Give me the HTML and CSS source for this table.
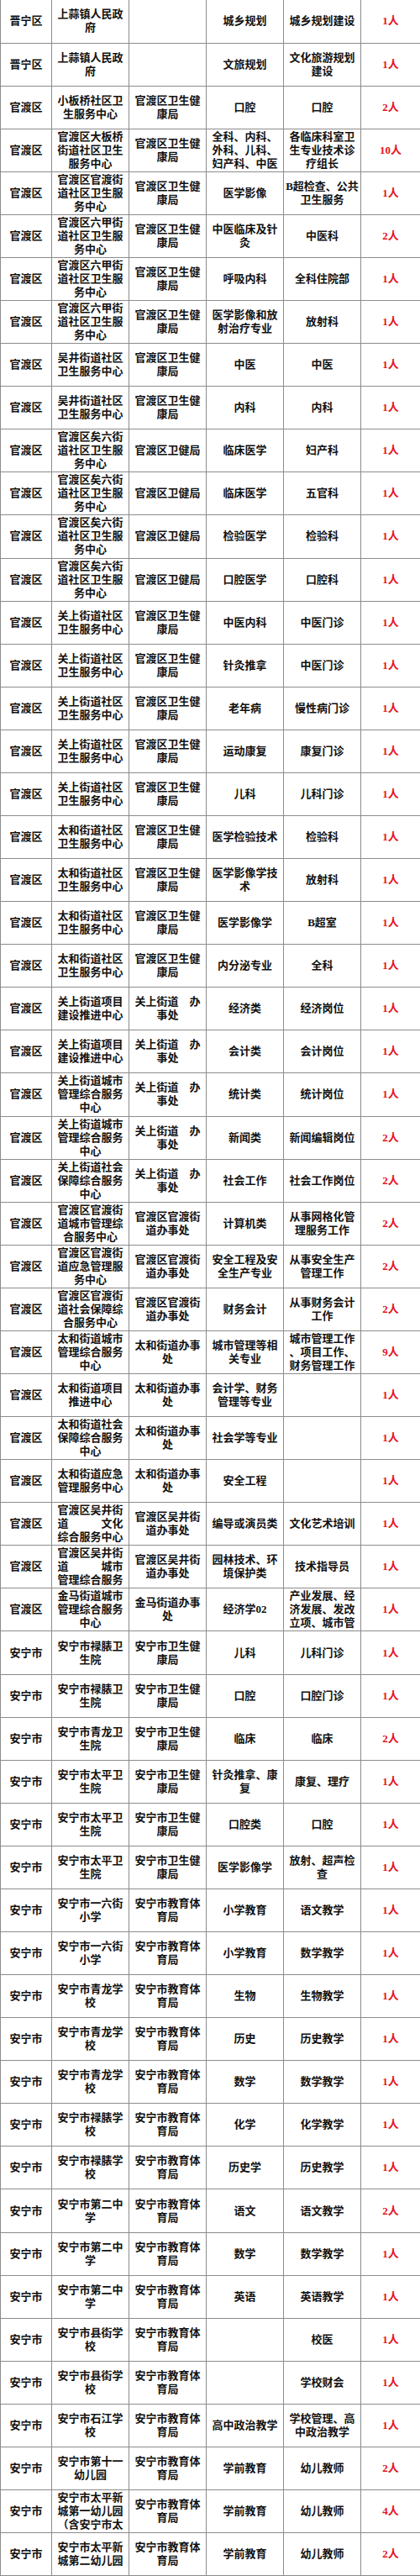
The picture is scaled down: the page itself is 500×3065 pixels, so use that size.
FILE: index.html
```html
<!DOCTYPE html>
<html lang="zh-CN">
<head>
<meta charset="utf-8">
<title>岗位表</title>
<link rel="stylesheet" href="styles.css">
</head>
<body>
<table class="sheet">
<colgroup>
<col class="w-area"><col class="w-unit"><col class="w-dept"><col class="w-major"><col class="w-post"><col class="w-num">
</colgroup>
<tbody>
<tr><td>晋宁区</td><td>上蒜镇人民政府</td><td></td><td>城乡规划</td><td>城乡规划建设</td><td class="num">1人</td></tr>
<tr><td>晋宁区</td><td>上蒜镇人民政府</td><td></td><td>文旅规划</td><td>文化旅游规划建设</td><td class="num">1人</td></tr>
<tr><td>官渡区</td><td>小板桥社区卫生服务中心</td><td>官渡区卫生健康局</td><td>口腔</td><td>口腔</td><td class="num">2人</td></tr>
<tr><td>官渡区</td><td>官渡区大板桥街道社区卫生服务中心</td><td>官渡区卫生健康局</td><td>全科、内科、外科、儿科、妇产科、中医</td><td>各临床科室卫生专业技术诊疗组长</td><td class="num">10人</td></tr>
<tr><td>官渡区</td><td>官渡区官渡街道社区卫生服务中心</td><td>官渡区卫生健康局</td><td>医学影像</td><td>B超检查、公共卫生服务</td><td class="num">1人</td></tr>
<tr><td>官渡区</td><td>官渡区六甲街道社区卫生服务中心</td><td>官渡区卫生健康局</td><td>中医临床及针灸</td><td>中医科</td><td class="num">2人</td></tr>
<tr><td>官渡区</td><td>官渡区六甲街道社区卫生服务中心</td><td>官渡区卫生健康局</td><td>呼吸内科</td><td>全科住院部</td><td class="num">1人</td></tr>
<tr><td>官渡区</td><td>官渡区六甲街道社区卫生服务中心</td><td>官渡区卫生健康局</td><td>医学影像和放射治疗专业</td><td>放射科</td><td class="num">1人</td></tr>
<tr><td>官渡区</td><td>吴井街道社区卫生服务中心</td><td>官渡区卫生健康局</td><td>中医</td><td>中医</td><td class="num">1人</td></tr>
<tr><td>官渡区</td><td>吴井街道社区卫生服务中心</td><td>官渡区卫生健康局</td><td>内科</td><td>内科</td><td class="num">1人</td></tr>
<tr><td>官渡区</td><td>官渡区矣六街道社区卫生服务中心</td><td>官渡区卫健局</td><td>临床医学</td><td>妇产科</td><td class="num">1人</td></tr>
<tr><td>官渡区</td><td>官渡区矣六街道社区卫生服务中心</td><td>官渡区卫健局</td><td>临床医学</td><td>五官科</td><td class="num">1人</td></tr>
<tr><td>官渡区</td><td>官渡区矣六街道社区卫生服务中心</td><td>官渡区卫健局</td><td>检验医学</td><td>检验科</td><td class="num">1人</td></tr>
<tr><td>官渡区</td><td>官渡区矣六街道社区卫生服务中心</td><td>官渡区卫健局</td><td>口腔医学</td><td>口腔科</td><td class="num">1人</td></tr>
<tr><td>官渡区</td><td>关上街道社区卫生服务中心</td><td>官渡区卫生健康局</td><td>中医内科</td><td>中医门诊</td><td class="num">1人</td></tr>
<tr><td>官渡区</td><td>关上街道社区卫生服务中心</td><td>官渡区卫生健康局</td><td>针灸推拿</td><td>中医门诊</td><td class="num">1人</td></tr>
<tr><td>官渡区</td><td>关上街道社区卫生服务中心</td><td>官渡区卫生健康局</td><td>老年病</td><td>慢性病门诊</td><td class="num">1人</td></tr>
<tr><td>官渡区</td><td>关上街道社区卫生服务中心</td><td>官渡区卫生健康局</td><td>运动康复</td><td>康复门诊</td><td class="num">1人</td></tr>
<tr><td>官渡区</td><td>关上街道社区卫生服务中心</td><td>官渡区卫生健康局</td><td>儿科</td><td>儿科门诊</td><td class="num">1人</td></tr>
<tr><td>官渡区</td><td>太和街道社区卫生服务中心</td><td>官渡区卫生健康局</td><td>医学检验技术</td><td>检验科</td><td class="num">1人</td></tr>
<tr><td>官渡区</td><td>太和街道社区卫生服务中心</td><td>官渡区卫生健康局</td><td>医学影像学技术</td><td>放射科</td><td class="num">1人</td></tr>
<tr><td>官渡区</td><td>太和街道社区卫生服务中心</td><td>官渡区卫生健康局</td><td>医学影像学</td><td>B超室</td><td class="num">1人</td></tr>
<tr><td>官渡区</td><td>太和街道社区卫生服务中心</td><td>官渡区卫生健康局</td><td>内分泌专业</td><td>全科</td><td class="num">1人</td></tr>
<tr><td>官渡区</td><td>关上街道项目建设推进中心</td><td>关上街道　办事处</td><td>经济类</td><td>经济岗位</td><td class="num">1人</td></tr>
<tr><td>官渡区</td><td>关上街道项目建设推进中心</td><td>关上街道　办事处</td><td>会计类</td><td>会计岗位</td><td class="num">1人</td></tr>
<tr><td>官渡区</td><td>关上街道城市管理综合服务中心</td><td>关上街道　办事处</td><td>统计类</td><td>统计岗位</td><td class="num">1人</td></tr>
<tr><td>官渡区</td><td>关上街道城市管理综合服务中心</td><td>关上街道　办事处</td><td>新闻类</td><td>新闻编辑岗位</td><td class="num">2人</td></tr>
<tr><td>官渡区</td><td>关上街道社会保障综合服务中心</td><td>关上街道　办事处</td><td>社会工作</td><td>社会工作岗位</td><td class="num">2人</td></tr>
<tr><td>官渡区</td><td>官渡区官渡街道城市管理综合服务中心</td><td>官渡区官渡街道办事处</td><td>计算机类</td><td>从事网格化管理服务工作</td><td class="num">2人</td></tr>
<tr><td>官渡区</td><td>官渡区官渡街道应急管理服务中心</td><td>官渡区官渡街道办事处</td><td>安全工程及安全生产专业</td><td>从事安全生产管理工作</td><td class="num">2人</td></tr>
<tr><td>官渡区</td><td>官渡区官渡街道社会保障综合服务中心</td><td>官渡区官渡街道办事处</td><td>财务会计</td><td>从事财务会计工作</td><td class="num">2人</td></tr>
<tr><td>官渡区</td><td>太和街道城市管理综合服务中心</td><td>太和街道办事处</td><td>城市管理等相关专业</td><td>城市管理工作<br>、项目工作、<br>财务管理工作</td><td class="num">9人</td></tr>
<tr><td>官渡区</td><td>太和街道项目推进中心</td><td>太和街道办事处</td><td>会计学、财务管理等专业</td><td></td><td class="num">1人</td></tr>
<tr><td>官渡区</td><td>太和街道社会保障综合服务中心</td><td>太和街道办事处</td><td>社会学等专业</td><td></td><td class="num">1人</td></tr>
<tr><td>官渡区</td><td>太和街道应急管理服务中心</td><td>太和街道办事处</td><td>安全工程</td><td></td><td class="num">1人</td></tr>
<tr><td>官渡区</td><td><div class="clip">官渡区吴井街<br>道<span class="gap"></span>文化<br>综合服务中心</div></td><td>官渡区吴井街道办事处</td><td>编导或演员类</td><td>文化艺术培训</td><td class="num">1人</td></tr>
<tr><td>官渡区</td><td><div class="clip">官渡区吴井街<br>道<span class="gap"></span>城市<br>管理综合服务<br>中心</div></td><td>官渡区吴井街道办事处</td><td>园林技术、环境保护类</td><td>技术指导员</td><td class="num">1人</td></tr>
<tr><td>官渡区</td><td>金马街道城市管理综合服务中心</td><td>金马街道办事处</td><td>经济学02</td><td><div class="clip">产业发展、经济发展、发改立项、城市管理</div></td><td class="num">1人</td></tr>
<tr><td>安宁市</td><td>安宁市禄脿卫生院</td><td>安宁市卫生健康局</td><td>儿科</td><td>儿科门诊</td><td class="num">1人</td></tr>
<tr><td>安宁市</td><td>安宁市禄脿卫生院</td><td>安宁市卫生健康局</td><td>口腔</td><td>口腔门诊</td><td class="num">1人</td></tr>
<tr><td>安宁市</td><td>安宁市青龙卫生院</td><td>安宁市卫生健康局</td><td>临床</td><td>临床</td><td class="num">2人</td></tr>
<tr><td>安宁市</td><td>安宁市太平卫生院</td><td>安宁市卫生健康局</td><td>针灸推拿、康复</td><td>康复、理疗</td><td class="num">1人</td></tr>
<tr><td>安宁市</td><td>安宁市太平卫生院</td><td>安宁市卫生健康局</td><td>口腔类</td><td>口腔</td><td class="num">1人</td></tr>
<tr><td>安宁市</td><td>安宁市太平卫生院</td><td>安宁市卫生健康局</td><td>医学影像学</td><td>放射、超声检查</td><td class="num">1人</td></tr>
<tr><td>安宁市</td><td>安宁市一六街小学</td><td>安宁市教育体育局</td><td>小学教育</td><td>语文教学</td><td class="num">1人</td></tr>
<tr><td>安宁市</td><td>安宁市一六街小学</td><td>安宁市教育体育局</td><td>小学教育</td><td>数学教学</td><td class="num">1人</td></tr>
<tr><td>安宁市</td><td>安宁市青龙学校</td><td>安宁市教育体育局</td><td>生物</td><td>生物教学</td><td class="num">1人</td></tr>
<tr><td>安宁市</td><td>安宁市青龙学校</td><td>安宁市教育体育局</td><td>历史</td><td>历史教学</td><td class="num">1人</td></tr>
<tr><td>安宁市</td><td>安宁市青龙学校</td><td>安宁市教育体育局</td><td>数学</td><td>数学教学</td><td class="num">1人</td></tr>
<tr><td>安宁市</td><td>安宁市禄脿学校</td><td>安宁市教育体育局</td><td>化学</td><td>化学教学</td><td class="num">1人</td></tr>
<tr><td>安宁市</td><td>安宁市禄脿学校</td><td>安宁市教育体育局</td><td>历史学</td><td>历史教学</td><td class="num">1人</td></tr>
<tr><td>安宁市</td><td>安宁市第二中学</td><td>安宁市教育体育局</td><td>语文</td><td>语文教学</td><td class="num">2人</td></tr>
<tr><td>安宁市</td><td>安宁市第二中学</td><td>安宁市教育体育局</td><td>数学</td><td>数学教学</td><td class="num">1人</td></tr>
<tr><td>安宁市</td><td>安宁市第二中学</td><td>安宁市教育体育局</td><td>英语</td><td>英语教学</td><td class="num">1人</td></tr>
<tr><td>安宁市</td><td>安宁市县街学校</td><td>安宁市教育体育局</td><td></td><td>校医</td><td class="num">1人</td></tr>
<tr><td>安宁市</td><td>安宁市县街学校</td><td>安宁市教育体育局</td><td></td><td>学校财会</td><td class="num">1人</td></tr>
<tr><td>安宁市</td><td>安宁市石江学校</td><td>安宁市教育体育局</td><td>高中政治教学</td><td>学校管理、高中政治教学</td><td class="num">1人</td></tr>
<tr><td>安宁市</td><td>安宁市第十一幼儿园</td><td>安宁市教育体育局</td><td>学前教育</td><td>幼儿教师</td><td class="num">2人</td></tr>
<tr><td>安宁市</td><td><div class="clip">安宁市太平新城第一幼儿园（含安宁市太平新城第一幼儿园分园）</div></td><td>安宁市教育体育局</td><td>学前教育</td><td>幼儿教师</td><td class="num">4人</td></tr>
<tr><td>安宁市</td><td>安宁市太平新城第二幼儿园</td><td>安宁市教育体育局</td><td>学前教育</td><td>幼儿教师</td><td class="num">2人</td></tr>
</tbody>
</table>
</body>
</html>
```
FILE: styles.css
```css
html, body {
  margin: 0;
  padding: 0;
  background: #ffffff;
}

body {
  font-family: "Liberation Serif", "Noto Sans CJK SC", serif;
  color: #111111;
}

.sheet {
  width: 500px;
  border-collapse: collapse;
  table-layout: fixed;
}

.w-area { width: 61px; }
.w-unit { width: 92px; }
.w-dept { width: 92px; }
.w-major { width: 92px; }
.w-post { width: 92px; }
.w-num { width: 71px; }

.sheet tr {
  height: 51.08px;
}

.sheet td {
  border: 1px solid #8c8c8c;
  padding: 0 1px;
  text-align: center;
  vertical-align: middle;
  font-size: 13px;
  line-height: 16px;
  font-weight: 700;
  overflow: hidden;
}

.sheet tr:first-child td {
  border-top: 0;
}

.clip {
  max-height: 48px;
  overflow: hidden;
}

.gap {
  display: inline-block;
  width: 39px;
}

.num {
  color: #e8141e;
}
```
